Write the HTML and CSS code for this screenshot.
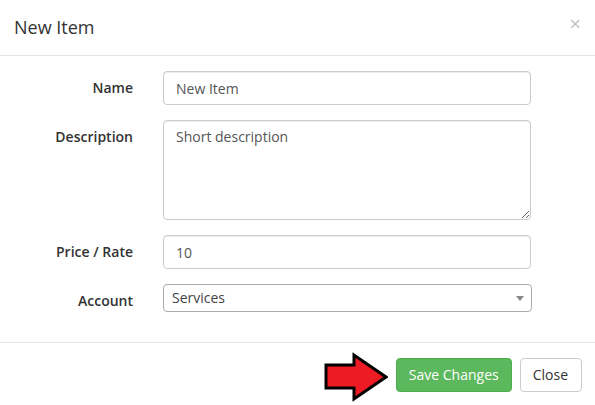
FILE: index.html
```html
<!DOCTYPE html>
<html>
<head>
<meta charset="utf-8">
<link rel="stylesheet" href="styles.css">
</head>
<body>
<div class="modal">
  <div class="modal-header">
    <h4 class="modal-title">New Item</h4>
    <span class="close">×</span>
  </div>
  <div class="modal-body">
    <div class="form-group">
      <label class="control-label">Name</label>
      <input class="form-control" type="text" value="New Item">
    </div>
    <div class="form-group">
      <label class="control-label">Description</label>
      <textarea class="form-control textarea">Short description</textarea>
    </div>
    <div class="form-group">
      <label class="control-label">Price / Rate</label>
      <input class="form-control" type="text" value="10">
    </div>
    <div class="form-group">
      <label class="control-label">Account</label>
      <div class="select">
        <span class="select-text">Services</span>
        <span class="select-arrow"></span>
      </div>
    </div>
  </div>
  <div class="modal-footer">
    <svg class="pointer" width="66" height="50" viewBox="322 351 66 50">
      <polygon points="326,364 354,364 354,354 386,376 354,398 354,387 326,387" fill="#ed1c24" stroke="#000" stroke-width="3" stroke-linejoin="miter"/>
    </svg>
    <button class="btn btn-success">Save Changes</button>
    <button class="btn btn-default">Close</button>
  </div>
</div>
</body>
</html>
```
FILE: styles.css
```css
* { box-sizing: border-box; }
html, body { margin: 0; padding: 0; }
body {
  background: #fff;
  font-family: "Open Sans", "Liberation Sans", sans-serif;
  font-size: 14px;
  line-height: 1.42857;
  color: #333;
  width: 595px;
  height: 405px;
  overflow: hidden;
}
.modal { width: 595px; background: #fff; }
.modal-header {
  display: flex;
  align-items: center;
  justify-content: space-between;
  padding: 15px 15px 15px 14px;
  height: 56px;
  border-bottom: 1px solid #e5e5e5;
}
.modal-title {
  margin: 0;
  font-size: 18px;
  font-weight: normal;
  line-height: 1.42857;
  color: #333;
}
.close {
  font-size: 20px;
  font-weight: normal;
  line-height: 1;
  color: #000;
  opacity: 0.25;
  margin-top: -7px;
  margin-right: -1px;
}
.modal-body { padding: 15px 0 15px 0; }
.form-group {
  display: grid;
  grid-template-columns: 148px 400px;
  align-items: start;
  margin-bottom: 15px;
}
.control-label {
  padding: 7px 15px 0 15px;
  text-align: right;
  font-weight: 600;
  color: #333;
}
.form-control {
  margin: 0 0 0 15px;
  display: block;
  width: 368px;
  height: 34px;
  padding: 6px 12px;
  font-family: inherit;
  font-size: 14px;
  line-height: 1.42857;
  color: #555;
  background: #fff;
  border: 1px solid #ccc;
  border-radius: 4px;
  box-shadow: inset 0 1px 1px rgba(0,0,0,.075);
  outline: none;
}
.textarea { height: 100px; resize: vertical; }
.select {
  margin: 0 0 0 15px;
  height: 28px;
  width: 369px;
  border: 1px solid #aaa;
  border-radius: 4px;
  background: #fff;
  display: flex;
  align-items: center;
  justify-content: space-between;
  padding: 0 7px 0 8px;
}
.select-text { color: #444; line-height: 26px; }
.select-arrow {
  width: 0; height: 0;
  border-left: 4px solid transparent;
  border-right: 4px solid transparent;
  border-top: 5px solid #888;
  margin-top: 1px;
}
.modal-footer {
  display: flex;
  justify-content: flex-end;
  align-items: center;
  padding: 15px 13px 15px 15px;
  border-top: 1px solid #e5e5e5;
}
.pointer { display: block; margin-right: 8px; margin-top: -6px; margin-bottom: -10px; }
.btn {
  height: 34px;
  padding: 6px 12px;
  font-family: inherit;
  font-size: 14px;
  line-height: 1.42857;
  border: 1px solid transparent;
  border-radius: 4px;
  cursor: pointer;
}
.btn + .btn { margin-left: 8px; }
.btn-success { background: #5cb85c; border-color: #4cae4c; color: #fff; }
.btn-default { background: #fff; border-color: #ccc; color: #333; padding: 6px 13px 6px 12px; }
```
